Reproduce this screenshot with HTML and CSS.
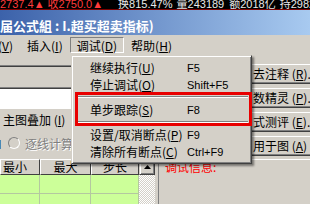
FILE: index.html
```html
<!DOCTYPE html>
<html>
<head>
<meta charset="utf-8">
<link rel="stylesheet" href="styles.css">
</head>
<body>
<div class="screen">
  <div class="ticker">
    <span class="tk red">2737.4▲</span>
    <span class="tk red t2">收2750.0▲</span>
    <span class="tk wht t3">换815.47%</span>
    <span class="tk wht t4">量243189</span>
    <span class="tk wht t5">额2018亿</span>
    <span class="tk wht t6">持2982</span>
  </div>
  <div class="title">届公式組 : I.超买超卖指标)</div>
  <div class="menubar">
    <span class="mi first">(<u>V</u>)</span>
    <span class="mi">插入(<u>I</u>)</span>
    <span class="mi pressed">调试(<u>D</u>)</span>
    <span class="mi">帮助(<u>H</u>)</span>
  </div>
  <div class="work">
    <div class="lefttop">
      <div class="field fgray"></div>
      <div class="field fwhite"></div>
      <div class="label">主图叠加 (<u>I</u>)</div>
      <div class="radiorow"><span class="cut">I</span><span class="radio"></span><span class="dis">逐线计算</span></div>
    </div>
    <div class="righttop">
      <div class="btn">去注释 (<u>R</u>)...</div>
      <div class="btn">数精灵 (<u>P</u>)...</div>
      <div class="btn">式测评 (<u>E</u>)...</div>
      <div class="btn">用于图 (<u>A</u>)</div>
    </div>
    <div class="tablearea">
      <div class="grid">
        <div class="hd">最小</div><div class="hd">最大</div><div class="hd">步长</div>
        <div class="cell"></div><div class="cell"></div><div class="cell"></div>
        <div class="cell"></div><div class="cell"></div><div class="cell"></div>
      </div>
      <div class="vscroll">
        <div class="sbtn"><svg width="7" height="4" viewBox="0 0 7 4"><path d="M3.5 0 L7 4 L0 4 Z" fill="#000"/></svg></div>
        <div class="track"></div>
      </div>
    </div>
    <div class="debug"><span class="dbgtext">调试信息:</span></div>
  </div>
  <div class="menu">
    <div class="item"><span class="lbl">继续执行(<u>U</u>)</span><span class="key">F5</span></div>
    <div class="item"><span class="lbl">停止调试(<u>O</u>)</span><span class="key">Shift+F5</span></div>
    <div class="sep"></div>
    <div class="item"><span class="lbl">单步跟踪(<u>S</u>)</span><span class="key">F8</span></div>
    <div class="sep"></div>
    <div class="item"><span class="lbl">设置/取消断点(<u>P</u>)</span><span class="key">F9</span></div>
    <div class="item"><span class="lbl">清除所有断点(<u>C</u>)</span><span class="key">Ctrl+F9</span></div>
  </div>
  <div class="redbox"></div>
</div>
</body>
</html>
```

FILE: styles.css
```css
html, body {
  margin: 0;
  padding: 0;
}
body {
  width: 310px;
  height: 204px;
  overflow: hidden;
  background: #d4d0c8;
  font-family: "Noto Sans CJK SC", "Liberation Sans", sans-serif;
  font-size: 12px;
  color: #000;
}
.screen {
  position: relative;
  width: 310px;
  height: 204px;
  overflow: hidden;
}
.ticker {
  height: 9px;
  background: #000;
  border-bottom: 1px solid #7a0000;
  display: flex;
  align-items: flex-end;
  overflow: hidden;
  white-space: nowrap;
}
.tk {
  font-family: "Liberation Sans", "Noto Sans CJK SC", sans-serif;
  font-size: 11px;
  line-height: 11px;
  margin-bottom: -1px;
}
.red { color: #ff3b3b; }
.wht { color: #e8e8e8; }
.t2 { margin-left: 3px; }
.t3 { margin-left: 15px; }
.t4 { margin-left: 4px; }
.t5 { margin-left: 5px; }
.t6 { margin-left: 4px; }

.title {
  height: 25px;
  box-sizing: border-box;
  padding-top: 7px;
  line-height: 17px;
  font-size: 13px;
  background: linear-gradient(to right, #3c62aa, #a8caf0);
  color: #fff;
  font-weight: bold;
  white-space: nowrap;
}
.menubar {
  height: 20px;
  display: flex;
  align-items: center;
  white-space: nowrap;
}
.mi {
  padding: 0 6px;
  height: 16px;
  line-height: 16px;
  box-sizing: border-box;
  border: 1px solid transparent;
}
.mi.first { margin-left: -9px; }
.mi.pressed {
  border-color: #808080 #fff #fff #808080;
}
.work {
  display: grid;
  grid-template-columns: 158px 94px 1fr;
  grid-template-rows: 104px 45px;
}
.lefttop {
  grid-column: 1 / 3;
  padding-top: 10px;
  display: flex;
  flex-direction: column;
}
.field {
  border-top: 1px solid #808080;
  box-shadow: inset 0 1px 0 #404040;
}
.fgray { height: 21px; }
.fwhite { height: 21px; background: #fff; }
.label {
  height: 22px;
  line-height: 22px;
  padding-left: 3px;
}
.radiorow {
  height: 24px;
  display: flex;
  align-items: center;
  white-space: nowrap;
}
.cut { margin-left: -2px; width: 6px; }
.radio {
  width: 12px;
  height: 12px;
  box-sizing: border-box;
  border-radius: 50%;
  border: 1px solid #808080;
  border-right-color: #fff;
  border-bottom-color: #fff;
  background: #d4d0c8;
  margin-left: 4px;
  margin-right: 5px;
}
.dis {
  color: #808080;
  text-shadow: 1px 1px 0 #fff;
}
.righttop {
  grid-column: 3;
  grid-row: 1;
  padding-top: 9px;
  display: flex;
  flex-direction: column;
  gap: 4px;
  margin-left: -12px;
}
.btn {
  height: 20px;
  box-sizing: border-box;
  border: 1px solid;
  border-color: #fff #404040 #404040 #fff;
  box-shadow: inset -1px -1px 0 #808080;
  line-height: 18px;
  padding-left: 12px;
  white-space: nowrap;
  overflow: hidden;
}
.tablearea {
  grid-column: 1;
  grid-row: 2;
  display: flex;
}
.grid {
  width: 139px;
  display: grid;
  grid-template-columns: 40px 51px 48px;
  grid-template-rows: 16px 19px 19px;
}
.hd {
  box-sizing: border-box;
  border: 1px solid;
  border-color: #fff #404040 #404040 #fff;
  line-height: 14px;
  text-align: center;
  background: #d4d0c8;
}
.hd:first-child { text-align: left; padding-left: 2px; }
.cell {
  background: #ccff99;
  border-right: 1px solid #b4c8a0;
  border-bottom: 1px solid #b4c8a0;
}
.vscroll {
  width: 16px;
  display: flex;
  flex-direction: column;
}
.sbtn {
  height: 16px;
  box-sizing: border-box;
  border: 1px solid;
  border-color: #d4d0c8 #404040 #404040 #d4d0c8;
  box-shadow: inset 1px 1px 0 #fff, inset -1px -1px 0 #808080;
  display: flex;
  align-items: center;
  justify-content: center;
}
.track {
  flex: 1;
  background-color: #fff;
  background-image:
    linear-gradient(45deg, #d4d0c8 25%, transparent 25%, transparent 75%, #d4d0c8 75%),
    linear-gradient(45deg, #d4d0c8 25%, transparent 25%, transparent 75%, #d4d0c8 75%);
  background-size: 2px 2px;
  background-position: 0 0, 1px 1px;
}
.debug {
  grid-column: 2 / 4;
  grid-row: 2;
  border-top: 1px solid #fff;
  border-left: 1px solid #808080;
  padding: 0 0 0 6px;
  line-height: 14px;
}
.dbgtext {
  color: #f00;
}

.menu {
  position: absolute;
  left: 71px;
  top: 55px;
  width: 181px;
  box-sizing: border-box;
  background: #d4d0c8;
  border: 1px solid;
  border-color: #d4d0c8 #404040 #404040 #d4d0c8;
  box-shadow: inset 1px 1px 0 #fff, inset -1px -1px 0 #808080, 2px 2px 2px rgba(0,0,0,0.45);
  padding: 3px;
}
.item {
  height: 17px;
  display: flex;
  align-items: center;
  white-space: nowrap;
}
.lbl {
  width: 112px;
  padding-left: 15px;
  box-sizing: border-box;
}
.key {
  font-family: "Liberation Sans", sans-serif;
  font-size: 11px;
}
.sep {
  height: 8px;
  display: flex;
  flex-direction: column;
  justify-content: center;
}
.sep::before {
  content: "";
  display: block;
  height: 1px;
  background: #808080;
  border-bottom: 1px solid #fff;
}
.redbox {
  position: absolute;
  left: 75px;
  top: 92px;
  width: 177px;
  height: 34px;
  box-sizing: border-box;
  border: 3px solid #e80000;
}
```
